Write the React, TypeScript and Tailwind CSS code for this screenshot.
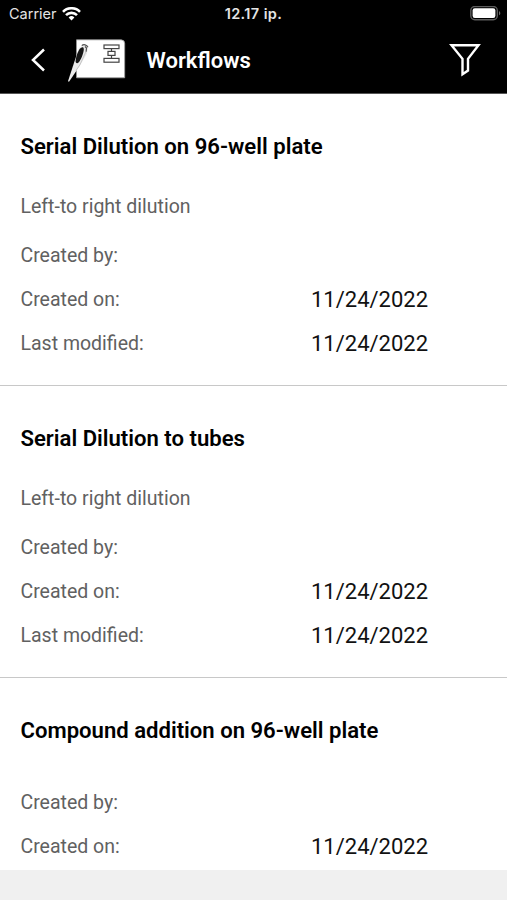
type Workflow = {
  name: string;
  description?: string;
  createdOn: string;
  modified?: string;
};

const workflows: Workflow[] = [
  {
    name: "Serial Dilution on 96-well plate",
    description: "Left-to right dilution",
    createdOn: "11/24/2022",
    modified: "11/24/2022",
  },
  {
    name: "Serial Dilution to tubes",
    description: "Left-to right dilution",
    createdOn: "11/24/2022",
    modified: "11/24/2022",
  },
  {
    name: "Compound addition on 96-well plate",
    createdOn: "11/24/2022",
  },
];

function StatusBar() {
  return (
    <div className="grid h-7 grid-cols-[1fr_auto_1fr] items-center pl-[9px] pr-[6px] font-['Inter',sans-serif] text-[#e4e4e4]">
      <div className="flex items-center gap-[5px]">
        <span className="text-[14.5px] leading-7">Carrier</span>
        <svg width="19" height="14" viewBox="0 0 19 14" fill="none" stroke="#fff" strokeWidth="2.6">
          <path d="M1 4.8a12 12 0 0 1 17 0" />
          <path d="M4 8.1a7.8 7.8 0 0 1 11 0" />
          <path d="M9.5 13.4 6.6 10.5a4.2 4.2 0 0 1 5.8 0z" fill="#fff" stroke="none" />
        </svg>
      </div>
      <span className="mr-[3px] text-[14.5px] font-semibold leading-7 tracking-[0.4px]">12.17 ip.</span>
      <svg className="justify-self-end" width="31" height="16" viewBox="0 0 31 16">
        <rect x="0.8" y="0.5" width="26.5" height="13.2" rx="4" fill="#000" stroke="#5d5d5d" strokeWidth="1.4" />
        <rect x="2.6" y="2.3" width="22.8" height="9.6" rx="2.2" fill="#fff" />
        <path d="M29 4.9c1.8.7 1.8 3.7 0 4.4z" fill="#6b6b6b" />
      </svg>
    </div>
  );
}

function PipetteLogo() {
  return (
    <svg width="60" height="46" viewBox="0 0 60 46" fill="none">
      <path d="M9.5 2.8H54q3.7 0 3.7 3.7v34.3H9.5z" fill="#fff" stroke="#999" strokeWidth="0.8" />
      {/* Flow chart */}
      <g stroke="#444" strokeWidth="1.2" fill="#fff">
        <path d="M44.5 11v12" />
        <rect x="37" y="8" width="15" height="3.6" />
        <rect x="41" y="14.4" width="7" height="4" />
        <rect x="37" y="21.4" width="15" height="3.8" />
      </g>
      {/* Pipette */}
      <path d="M12 11 17 7.6l4 3-1 6L13.4 28 2 44.8l-1-.6L7.6 24z" fill="#ececec" />
      <path d="M12 13c2-3 4.9-3.8 4.8-.6-.2 4-2.8 10.2-5 12.8-1.6 1.8-3.4 1-3.2-1.2.2-3 1.4-7.8 3.4-11z" fill="#151515" />
      <path d="M14.8 8.7c1.7-1.8 5-1 6.2 1.5M18 9.5l1.5 1.5-.4 3.8" stroke="#555" strokeWidth="1.2" />
      <path d="M18.8 15 12.8 28 9 33.5" stroke="#bbb" strokeWidth="0.8" />
    </svg>
  );
}

function Header() {
  return (
    <header className="h-[94px] border-b border-[#555] bg-black text-white">
      <StatusBar />
      <div className="flex h-16 items-center pl-[31px] pr-[26px]">
        <svg width="15" height="24" viewBox="0 0 15 24" fill="none" stroke="#fff" strokeWidth="2.5">
          <path d="M13 1.5 2 12l11 10.5" />
        </svg>
        <div className="ml-[21px]">
          <PipetteLogo />
        </div>
        <h1 className="ml-[19.5px] text-[22px] font-semibold">Workflows</h1>
        <svg className="ml-auto" width="32" height="34" viewBox="0 0 32 34" fill="none" stroke="#fff" strokeWidth="2.4">
          <path d="M2.5 2.2h27L19 15.8v11.8l-5.5 3.6V15.8z" />
        </svg>
      </div>
    </header>
  );
}

function Row({ label, value }: { label: string; value?: string }) {
  return (
    <div className="flex h-11 items-center">
      <span className="w-[290.5px] text-[19.5px] text-[#616161]">{label}</span>
      <span className="pb-px text-[22px] leading-8 text-[#111]">{value}</span>
    </div>
  );
}

function WorkflowCard({ workflow }: { workflow: Workflow }) {
  return (
    <article className="border-b border-[#c8c8c8] px-[20.5px] pb-[19px] pt-9">
      <h2 className="text-[22.1px] font-semibold leading-8 text-black">{workflow.name}</h2>
      <p className="mb-[15px] mt-[33px] h-6 text-[19.5px] leading-6 text-[#616161] empty:mb-0 empty:mt-[35px] empty:h-0">
        {workflow.description}
      </p>
      <Row label="Created by:" />
      <Row label="Created on:" value={workflow.createdOn} />
      {workflow.modified && <Row label="Last modified:" value={workflow.modified} />}
    </article>
  );
}

export default function App() {
  return (
    <div className="flex h-[900px] w-[507px] flex-col overflow-hidden bg-[#f0f0f0] font-['Roboto',sans-serif]">
      <Header />
      <main className="h-[776px] overflow-hidden bg-white">
        {workflows.map((workflow) => (
          <WorkflowCard key={workflow.name} workflow={workflow} />
        ))}
      </main>
    </div>
  );
}
